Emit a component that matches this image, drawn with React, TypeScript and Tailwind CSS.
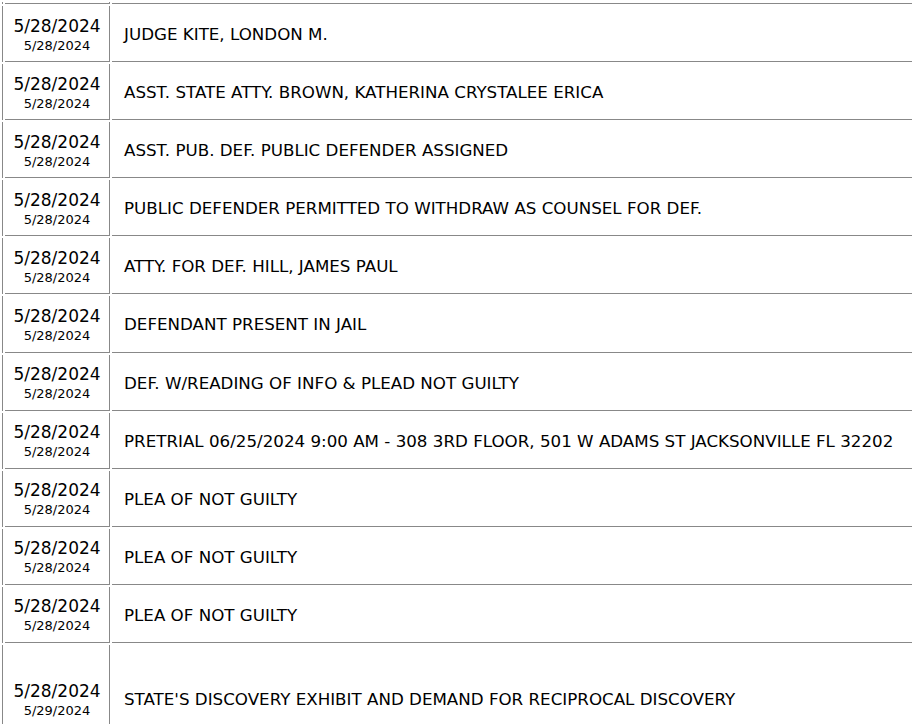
import React from 'react';

type Entry = { filed: string; entered: string; text: string; tall?: boolean };

const entries: Entry[] = [
  { filed: '5/28/2024', entered: '5/28/2024', text: 'JUDGE KITE, LONDON M.' },
  { filed: '5/28/2024', entered: '5/28/2024', text: 'ASST. STATE ATTY. BROWN, KATHERINA CRYSTALEE ERICA' },
  { filed: '5/28/2024', entered: '5/28/2024', text: 'ASST. PUB. DEF. PUBLIC DEFENDER ASSIGNED' },
  { filed: '5/28/2024', entered: '5/28/2024', text: 'PUBLIC DEFENDER PERMITTED TO WITHDRAW AS COUNSEL FOR DEF.' },
  { filed: '5/28/2024', entered: '5/28/2024', text: 'ATTY. FOR DEF. HILL, JAMES PAUL' },
  { filed: '5/28/2024', entered: '5/28/2024', text: 'DEFENDANT PRESENT IN JAIL' },
  { filed: '5/28/2024', entered: '5/28/2024', text: 'DEF. W/READING OF INFO & PLEAD NOT GUILTY' },
  { filed: '5/28/2024', entered: '5/28/2024', text: 'PRETRIAL 06/25/2024 9:00 AM - 308 3RD FLOOR, 501 W ADAMS ST JACKSONVILLE FL 32202' },
  { filed: '5/28/2024', entered: '5/28/2024', text: 'PLEA OF NOT GUILTY' },
  { filed: '5/28/2024', entered: '5/28/2024', text: 'PLEA OF NOT GUILTY' },
  { filed: '5/28/2024', entered: '5/28/2024', text: 'PLEA OF NOT GUILTY' },
  { filed: '5/28/2024', entered: '5/29/2024', text: "STATE'S DISCOVERY EXHIBIT AND DEMAND FOR RECIPROCAL DISCOVERY", tall: true },
];

const Row: React.FC<{ entry: Entry }> = ({ entry }) => (
  <div className={`flex gap-[2px] ${entry.tall ? 'h-[108px]' : 'h-[56.1px]'}`}>
    <div className="w-px shrink-0 border-r border-[#888]" />
    <div className="w-[105px] shrink-0 flex flex-col items-center justify-center pt-[4px] border-r border-b border-[#888]">
      <div className="text-[17px] leading-[19px]">{entry.filed}</div>
      <div className="mt-[1px] text-[13px] leading-[18px]">{entry.entered}</div>
    </div>
    <div className="flex-1 flex items-center pl-[12px] pt-[2px] text-[16.7px] whitespace-nowrap border-b border-[#888]">
      {entry.text}
    </div>
  </div>
);

export default function App() {
  return (
    <div className="w-[912px] h-[724px] overflow-hidden bg-white text-black font-['DejaVu_Sans',Verdana,sans-serif]">
      <div className="w-[1100px] flex flex-col gap-[2px] pt-[2px] pl-[2px]">
        <div className="flex gap-[2px] h-[2px]">
          <div className="w-px shrink-0 border-r border-[#888]" />
          <div className="w-[105px] shrink-0 border-r border-b border-[#888]" />
          <div className="flex-1 border-b border-[#888]" />
        </div>
        {entries.map((e, i) => (
          <Row key={i} entry={e} />
        ))}
      </div>
    </div>
  );
}
